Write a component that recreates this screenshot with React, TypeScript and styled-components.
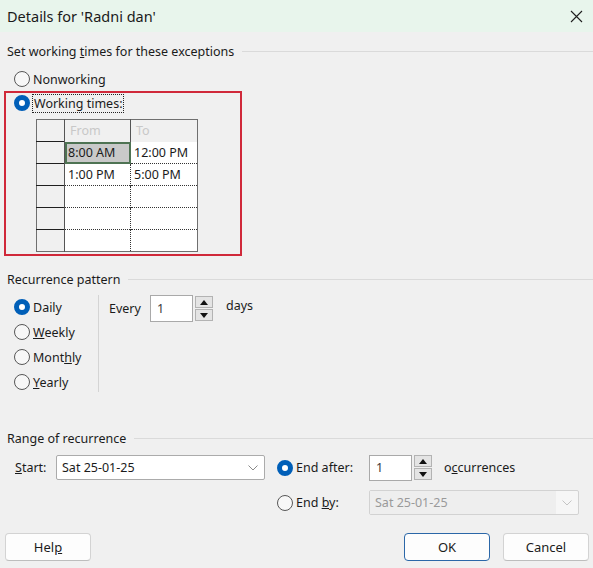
import styled, { createGlobalStyle, css } from "styled-components";

const GlobalStyle = createGlobalStyle`
  html, body {
    margin: 0;
    padding: 0;
  }
  body {
    background: #f0f0f0;
    font-family: "Noto Sans", "Liberation Sans", sans-serif;
    font-size: 12.5px;
    color: #1b1b1b;
  }
  * {
    box-sizing: border-box;
  }
`;

const Dialog = styled.div`
  width: 593px;
  height: 568px;
  background: #f0f0f0;
  display: flex;
  flex-direction: column;
  overflow: hidden;
`;

const TitleBar = styled.div`
  height: 32px;
  flex: none;
  display: flex;
  align-items: center;
  justify-content: space-between;
  padding: 0 10px 0 7px;
  background: #e8f5ec;
`;

const Title = styled.div`
  font-size: 14.5px;
  color: #1a1a1a;
`;

const GroupHeader = styled.div<{ $top: number }>`
  display: flex;
  align-items: center;
  height: 16px;
  margin-top: ${(p) => p.$top}px;
  padding-left: 7px;

  &::after {
    content: "";
    flex: 1;
    height: 1px;
    background: #dadada;
    margin-left: 8px;
  }
`;

const Option = styled.div<{ $top?: number; $left?: number }>`
  display: flex;
  align-items: center;
  gap: 3px;
  height: 20px;
  margin-top: ${(p) => p.$top ?? 0}px;
  padding-left: ${(p) => p.$left ?? 0}px;
  white-space: nowrap;
`;

const RadioDot = styled.span<{ $on?: boolean }>`
  width: 16px;
  height: 16px;
  flex: none;
  border-radius: 50%;
  ${(p) =>
    p.$on
      ? css`
          background: #fff;
          border: 5px solid #005fb8;
        `
      : css`
          background: #f7f7f7;
          border: 1px solid #575757;
        `}
`;

const FocusLabel = styled.span`
  outline: 1px dotted #222;
  outline-offset: 0;
  padding: 0 1px;
`;

const Highlight = styled.div`
  width: 238px;
  margin: 2px 0 0 4px;
  border: 2px solid #d0293a;
  padding: 0 0 2px 8px;
`;

const TimeTable = styled.table`
  border-collapse: collapse;
  margin: 6px 0 0 22px;
  border: 1px solid #6f6f6f;
  font-size: 12.5px;

  th,
  td {
    height: 22px;
    padding: 0 0 0 3px;
    text-align: left;
    font-weight: normal;
  }
`;

const Corner = styled.th`
  width: 28px;
  background: #f0f0f0;
`;

const HeadCell = styled.th<{ $w: number }>`
  width: ${(p) => p.$w}px;
  background: #f0f0f0;
  color: #c8c8c8;
  border-left: 1px solid #555;
  && {
    padding-left: 5px;
  }
`;

const RowHead = styled.td`
  background: #f0f0f0;
  border-top: 1px solid #1f1f1f;
`;

const Cell = styled.td<{ $first?: boolean; $sel?: boolean; $top?: boolean }>`
  background: ${(p) => (p.$sel ? "#c9c9c9" : "#fff")};
  border-top: ${(p) => (p.$top ? "none" : "1px dotted #333")};
  border-left: 1px ${(p) => (p.$first ? "solid #555" : "dotted #333")};
  ${(p) =>
    p.$sel &&
    css`
      outline: 2px solid #4e7353;
      outline-offset: -2px;
    `}
`;

const Recurrence = styled.div`
  display: flex;
  margin-top: 10px;
  padding-left: 14px;
`;

const RadioColumn = styled.div`
  width: 84px;
  display: flex;
  flex-direction: column;
  gap: 5px;
`;

const VSep = styled.div`
  width: 1px;
  background: #d4d4d4;
  margin-top: -2px;
`;

const EveryRow = styled.div`
  display: flex;
  align-items: center;
  height: 27px;
  margin: -2px 0 0 10px;
`;

const EveryLabel = styled.span`
  width: 41px;
`;

const NumberBox = styled.div<{ $h: number }>`
  width: 43px;
  height: ${(p) => p.$h}px;
  background: #fff;
  border: 1px solid #a9a9a9;
  padding-left: 6px;
  display: flex;
  align-items: center;
  color: #3a3a3a;
`;

const Spinner = styled.div`
  display: flex;
  flex-direction: column;
  gap: 1px;
  margin-left: 2px;
`;

const SpinButton = styled.div`
  width: 18px;
  height: 12px;
  background: #e4e4e4;
  border: 1px solid #b3b3b3;
  display: flex;
  align-items: center;
  justify-content: center;
`;

const Unit = styled.span<{ $left: number; $lift?: number }>`
  margin-left: ${(p) => p.$left}px;
  margin-top: ${(p) => -(p.$lift ?? 0)}px;
`;

const RangeGrid = styled.div`
  display: grid;
  grid-template-columns: 41px 221px 92px auto;
  grid-template-rows: 25px 25px;
  row-gap: 10px;
  align-items: center;
  margin-top: 9px;
  padding-left: 15px;
`;

const Combo = styled.div<{ $w: number; $disabled?: boolean }>`
  width: ${(p) => p.$w}px;
  height: 25px;
  border: 1px solid ${(p) => (p.$disabled ? "#d2d2d2" : "#ababab")};
  border-radius: 2px;
  background: ${(p) => (p.$disabled ? "#f6f6f6" : "#fff")};
  color: ${(p) => (p.$disabled ? "#9a9a9a" : "#1b1b1b")};
  display: flex;
  align-items: center;
`;

const ComboText = styled.span<{ $disabled?: boolean }>`
  flex: 1;
  align-self: stretch;
  display: flex;
  align-items: center;
  padding-left: 5px;
  background: ${(p) => (p.$disabled ? "#eeeeee" : "transparent")};
`;

const ComboArrow = styled.span`
  width: 22px;
  display: flex;
  justify-content: center;
`;

const InlineRow = styled.div`
  display: flex;
  align-items: center;
`;

const Footer = styled.div`
  display: flex;
  align-items: center;
  margin-top: 18px;
  padding: 0 4px 0 5px;
`;

const Button = styled.button<{ $primary?: boolean; $push?: boolean }>`
  width: 86px;
  height: 28px;
  border-radius: 4px;
  border: 1px solid ${(p) => (p.$primary ? "#2b67a8" : "#d3d3d3")};
  border-bottom-color: ${(p) => (p.$primary ? "#2b67a8" : "#bdbdbd")};
  background: #fdfdfd;
  font: inherit;
  font-size: 13px;
  color: #1b1b1b;
  padding: 0;
  margin-left: ${(p) => (p.$push ? "auto" : "13px")};

  &:first-child {
    margin-left: 0;
  }
`;

const CloseIcon = () => (
  <svg width="13" height="13" viewBox="0 0 13 13">
    <path d="M1 1 L12 12 M12 1 L1 12" stroke="#1f1f1f" strokeWidth="1.1" />
  </svg>
);

const Chevron = ({ color }: { color: string }) => (
  <svg width="10" height="6" viewBox="0 0 10 6">
    <path d="M0.5 0.5 L5 5 L9.5 0.5" fill="none" stroke={color} strokeWidth="1" />
  </svg>
);

const Triangle = ({ up }: { up?: boolean }) => (
  <svg width="8" height="5" viewBox="0 0 8 5">
    <path d={up ? "M0 5 L4 0 L8 5 Z" : "M0 0 L8 0 L4 5 Z"} fill="#111" />
  </svg>
);

const Radio = ({
  on,
  children,
  top,
  left,
}: {
  on?: boolean;
  children: React.ReactNode;
  top?: number;
  left?: number;
}) => (
  <Option $top={top} $left={left}>
    <RadioDot $on={on} />
    <span>{children}</span>
  </Option>
);

const NumberSpin = ({ h }: { h: number }) => (
  <>
    <NumberBox $h={h}>1</NumberBox>
    <Spinner>
      <SpinButton>
        <Triangle up />
      </SpinButton>
      <SpinButton>
        <Triangle />
      </SpinButton>
    </Spinner>
  </>
);

const rows = [
  ["8:00 AM", "12:00 PM"],
  ["1:00 PM", "5:00 PM"],
  ["", ""],
  ["", ""],
  ["", ""],
];

export default function App() {
  return (
    <Dialog>
      <GlobalStyle />
      <TitleBar>
        <Title>Details for 'Radni dan'</Title>
        <CloseIcon />
      </TitleBar>

      <GroupHeader $top={11}>
        Set working&nbsp;<u>t</u>imes for these exceptions
      </GroupHeader>
      <Radio top={10} left={14}>
        Nonworking
      </Radio>

      <Highlight>
        <Option>
          <RadioDot $on />
          <FocusLabel>Working times:</FocusLabel>
        </Option>
        <TimeTable>
          <thead>
            <tr>
              <Corner />
              <HeadCell $w={66}>From</HeadCell>
              <HeadCell $w={67}>To</HeadCell>
            </tr>
          </thead>
          <tbody>
            {rows.map((r, i) => (
              <tr key={i}>
                <RowHead />
                <Cell $first $top={i === 0} $sel={i === 0}>
                  {r[0]}
                </Cell>
                <Cell $top={i === 0}>{r[1]}</Cell>
              </tr>
            ))}
          </tbody>
        </TimeTable>
      </Highlight>

      <GroupHeader $top={15}>Recurrence pattern</GroupHeader>
      <Recurrence>
        <RadioColumn>
          <Radio on>Daily</Radio>
          <Radio>
            <u>W</u>eekly
          </Radio>
          <Radio>
            Mont<u>h</u>ly
          </Radio>
          <Radio>
            <u>Y</u>early
          </Radio>
        </RadioColumn>
        <VSep />
        <div>
          <EveryRow>
            <EveryLabel>Every</EveryLabel>
            <NumberSpin h={27} />
            <Unit $left={13} $lift={6}>
              days
            </Unit>
          </EveryRow>
        </div>
      </Recurrence>

      <GroupHeader $top={38}>Range of recurrence</GroupHeader>
      <RangeGrid>
        <span>
          <u>S</u>tart:
        </span>
        <Combo $w={209}>
          <ComboText>Sat 25-01-25</ComboText>
          <ComboArrow>
            <Chevron color="#8a8a8a" />
          </ComboArrow>
        </Combo>
        <Radio on>End after:</Radio>
        <InlineRow>
          <NumberSpin h={26} />
          <Unit $left={12}>
            o<u>c</u>currences
          </Unit>
        </InlineRow>

        <span />
        <span />
        <Radio>
          End <u>b</u>y:
        </Radio>
        <Combo $w={210} $disabled>
          <ComboText $disabled>Sat 25-01-25</ComboText>
          <ComboArrow>
            <Chevron color="#c4c4c4" />
          </ComboArrow>
        </Combo>
      </RangeGrid>

      <Footer>
        <Button>
          Hel<u>p</u>
        </Button>
        <Button $primary $push>
          OK
        </Button>
        <Button>Cancel</Button>
      </Footer>
    </Dialog>
  );
}
